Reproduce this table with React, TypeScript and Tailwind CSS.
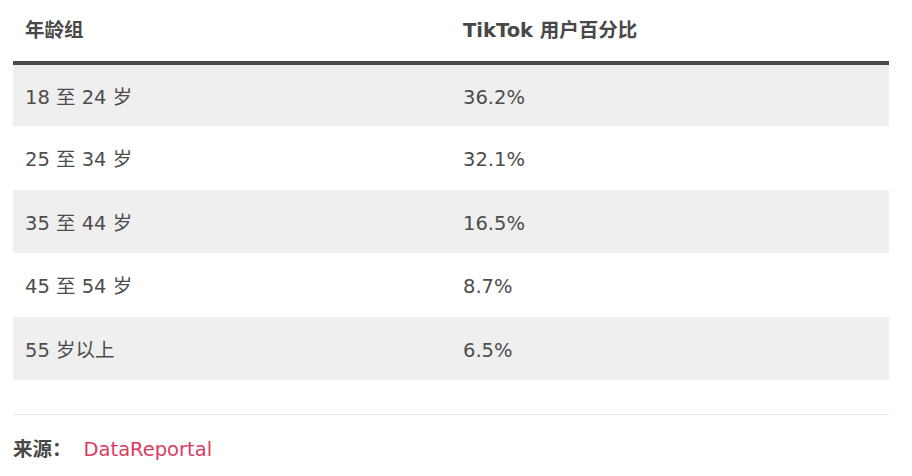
const rows = [
  { age: '18 至 24 岁', share: '36.2%' },
  { age: '25 至 34 岁', share: '32.1%' },
  { age: '35 至 44 岁', share: '16.5%' },
  { age: '45 至 54 岁', share: '8.7%' },
  { age: '55 岁以上', share: '6.5%' },
];

export default function App() {
  return (
    <div
      className="w-[912px] h-[476px] bg-white pl-[13px] pr-[23px] text-[#4d4d4d]"
      style={{ fontFamily: '"DejaVu Sans", "Noto Sans CJK SC", sans-serif' }}
    >
      <table className="w-full table-fixed border-collapse">
        <thead>
          <tr className="border-b-4 border-[#4a4a4a]">
            <th className="h-[63px] px-3 pt-[1px] text-left text-[19.5px] font-bold text-[#484848]">年龄组</th>
            <th className="h-[63px] px-3 pt-[1px] text-left text-[19.5px] font-bold text-[#484848]">TikTok 用户百分比</th>
          </tr>
        </thead>
        <tbody>
          {rows.map((r, i) => (
            <tr key={r.age} className={i % 2 === 0 ? 'bg-[#efefef]' : 'bg-white'}>
              <td className="h-[63.4px] px-3 pt-[4px] text-[19.5px]">{r.age}</td>
              <td className="h-[63.4px] px-3 pt-[4px] text-[19.5px]">{r.share}</td>
            </tr>
          ))}
        </tbody>
      </table>
      <div className="mt-[34px] border-t border-[#e8e8e8] pt-[20px] flex items-center text-[19.5px]">
        <span className="font-bold text-[#484848]">来源：</span>
        <span className="ml-[12px] text-[#d93d63]">DataReportal</span>
      </div>
    </div>
  );
}
